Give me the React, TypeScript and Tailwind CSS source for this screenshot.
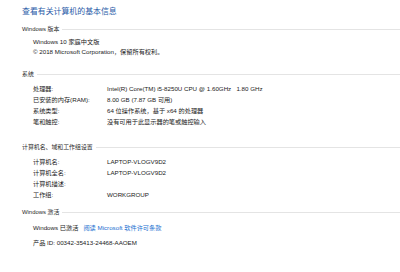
import React from 'react';

const font = { fontFamily: '"Liberation Sans", "Noto Sans CJK SC", sans-serif' };

function Heading({ text, className = '' }: { text: string; className?: string }) {
  return (
    <div className={`flex h-[10px] items-center gap-[3px] ${className}`}>
      <span className="whitespace-nowrap text-[5.9px] leading-[10px] text-[#2a2a2a]">{text}</span>
      <div className="h-px flex-1 bg-[#e4e4e4]" />
    </div>
  );
}

function Row({ label, value }: { label: string; value?: React.ReactNode }) {
  return (
    <div className="flex h-[11px] items-center pl-[11px] text-[6.2px] leading-[11px] text-[#1a1a1a]">
      <span className="w-[74px] whitespace-nowrap">{label}</span>
      <span className="whitespace-nowrap">{value}</span>
    </div>
  );
}

export default function App() {
  return (
    <div className="flex h-[272px] w-[400px] flex-col overflow-hidden bg-white pl-[22px] pt-[6px]" style={font}>
      <div className="h-[12px] whitespace-nowrap text-[7.9px] leading-[12px] text-[#2b5ca8]">
        查看有关计算机的基本信息
      </div>

      <Heading text="Windows 版本" className="mt-[6px]" />
      <div className="mt-[3px] flex flex-col pl-[11px] text-[6.2px] leading-[10px] text-[#1a1a1a]">
        <div className="h-[10px] whitespace-nowrap">Windows 10 家庭中文版</div>
        <div className="h-[10px] whitespace-nowrap">© 2018 Microsoft Corporation，保留所有权利。</div>
      </div>

      <Heading text="系统" className="mt-[12px]" />
      <div className="mt-[4px] flex flex-col">
        <Row label="处理器:" value={<>Intel(R) Core(TM) i5-8250U CPU @ 1.60GHz&nbsp;&nbsp;&nbsp;1.80 GHz</>} />
        <Row label="已安装的内存(RAM):" value="8.00 GB (7.87 GB 可用)" />
        <Row label="系统类型:" value="64 位操作系统，基于 x64 的处理器" />
        <Row label="笔和触控:" value="没有可用于此显示器的笔或触控输入" />
      </div>

      <Heading text="计算机名、域和工作组设置" className="mt-[15px]" />
      <div className="mt-[4px] flex flex-col">
        <Row label="计算机名:" value="LAPTOP-VLOGV9D2" />
        <Row label="计算机全名:" value="LAPTOP-VLOGV9D2" />
        <Row label="计算机描述:" />
        <Row label="工作组:" value="WORKGROUP" />
      </div>

      <Heading text="Windows 激活" className="mt-[7px]" />
      <div className="mt-[5px] flex h-[11px] items-center gap-[5px] pl-[11px] text-[6.2px] leading-[11px]">
        <span className="whitespace-nowrap text-[#1a1a1a]">Windows 已激活</span>
        <span className="whitespace-nowrap text-[#1a6fd0]">阅读 Microsoft 软件许可条款</span>
      </div>
      <div className="mt-[4px] h-[11px] whitespace-nowrap pl-[11px] text-[6.2px] leading-[11px] text-[#1a1a1a]">
        产品 ID: 00342-35413-24468-AAOEM
      </div>
    </div>
  );
}
